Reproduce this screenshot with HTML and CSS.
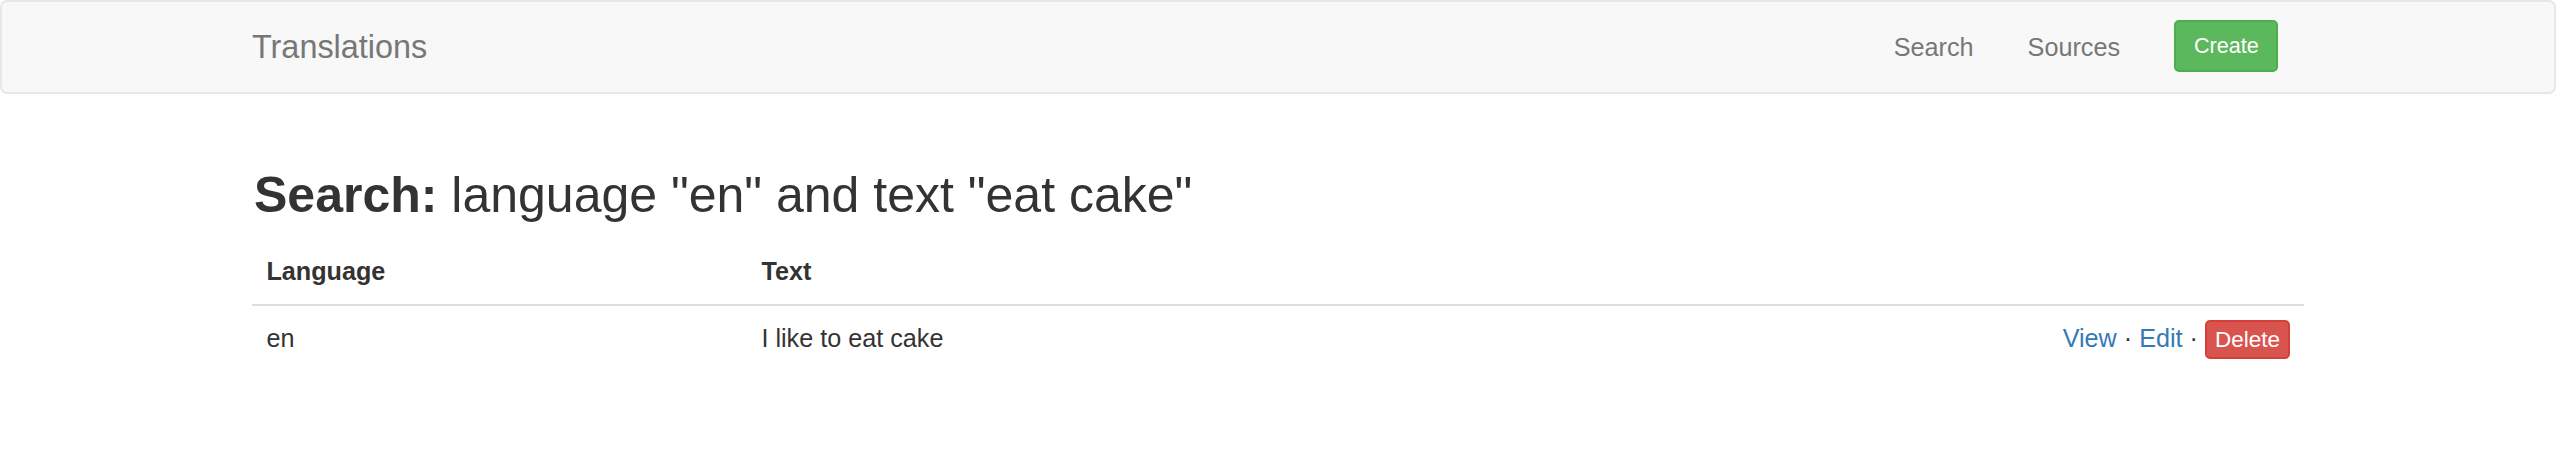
FILE: index.html
```html
<!DOCTYPE html>
<html lang="en">
<head>
<meta charset="utf-8">
<title>Translations</title>
<link rel="stylesheet" href="styles.css">
</head>
<body>
<nav class="navbar">
  <div class="container nav-inner">
    <a class="brand" href="#">Translations</a>
    <div class="nav-right">
      <a class="nav-link" href="#">Search</a>
      <a class="nav-link" href="#">Sources</a>
      <div class="nav-form">
        <a class="btn btn-sm btn-success" href="#">Create</a>
      </div>
    </div>
  </div>
</nav>
<main class="container content">
  <h2 class="title"><strong>Search:</strong> language "en" and text "eat cake"</h2>
  <table class="table">
    <thead>
      <tr>
        <th class="col-lang">Language</th>
        <th class="col-text">Text</th>
        <th class="col-actions"></th>
      </tr>
    </thead>
    <tbody>
      <tr>
        <td>en</td>
        <td>I like to eat cake</td>
        <td class="actions"><a href="#">View</a> · <a href="#">Edit</a> · <a class="btn btn-xs btn-danger" href="#">Delete</a></td>
      </tr>
    </tbody>
  </table>
</main>
</body>
</html>
```
FILE: styles.css
```css
* { box-sizing: border-box; }
html, body { margin: 0; padding: 0; }
body {
  font-family: "Liberation Sans", Arial, Helvetica, sans-serif;
  font-size: 25.2px;
  line-height: 36px;
  color: #333;
  background: #fff;
}
a { color: #337ab7; text-decoration: none; }

.container {
  width: 2106px;
  margin: 0 auto;
  padding: 0 27px;
}

.navbar {
  background: #f8f8f8;
  border: 2px solid #e7e7e7;
  border-radius: 7px;
  min-height: 93px;
  margin-bottom: 36px;
}
.nav-inner {
  display: flex;
  align-items: flex-start;
  justify-content: space-between;
}
.brand {
  font-size: 32.4px;
  line-height: 36px;
  padding: 27px 27px;
  margin-left: -27px;
  color: #777;
}
.nav-right {
  display: flex;
  align-items: flex-start;
}
.nav-link {
  color: #777;
  padding: 27px 27px;
  line-height: 36px;
}
.nav-form {
  padding: 18px 26px 18px 27px;
}

.btn {
  display: inline-block;
  color: #fff;
  border: 2px solid transparent;
  text-align: center;
  white-space: nowrap;
  vertical-align: middle;
}
.btn-sm {
  font-size: 21.6px;
  line-height: 32px;
  padding: 8px 18px;
  border-radius: 5px;
  width: 104px;
}
.btn-xs {
  font-size: 22.5px;
  line-height: 33px;
  padding: 1px 8px;
  border-radius: 5px;
}
.btn-success { background: #5cb85c; border-color: #4cae4c; }
.btn-danger { background: #d9534f; border-color: #d43f3a; }

.content {
  display: flow-root;
  padding-top: 38px;
}
.title {
  font-size: 50px;
  font-weight: 400;
  line-height: 54px;
  margin: 0 0 17px 2px;
}
.title strong { font-weight: 700; }

.table {
  width: 100%;
  border-collapse: collapse;
  border-spacing: 0;
}
.table th, .table td {
  padding: 14.4px;
  text-align: left;
  vertical-align: bottom;
  line-height: 36px;
}
.table th {
  font-weight: 700;
  border-bottom: 2px solid #ddd;
}
.table td {
  vertical-align: top;
  border-top: 1px solid #ddd;
}
.col-lang { width: 495px; }
.col-actions { width: 1%; }
.table td.actions {
  text-align: right;
  white-space: nowrap;
  padding-right: 14px;
}
.actions .btn { margin-top: -2px; }
```
